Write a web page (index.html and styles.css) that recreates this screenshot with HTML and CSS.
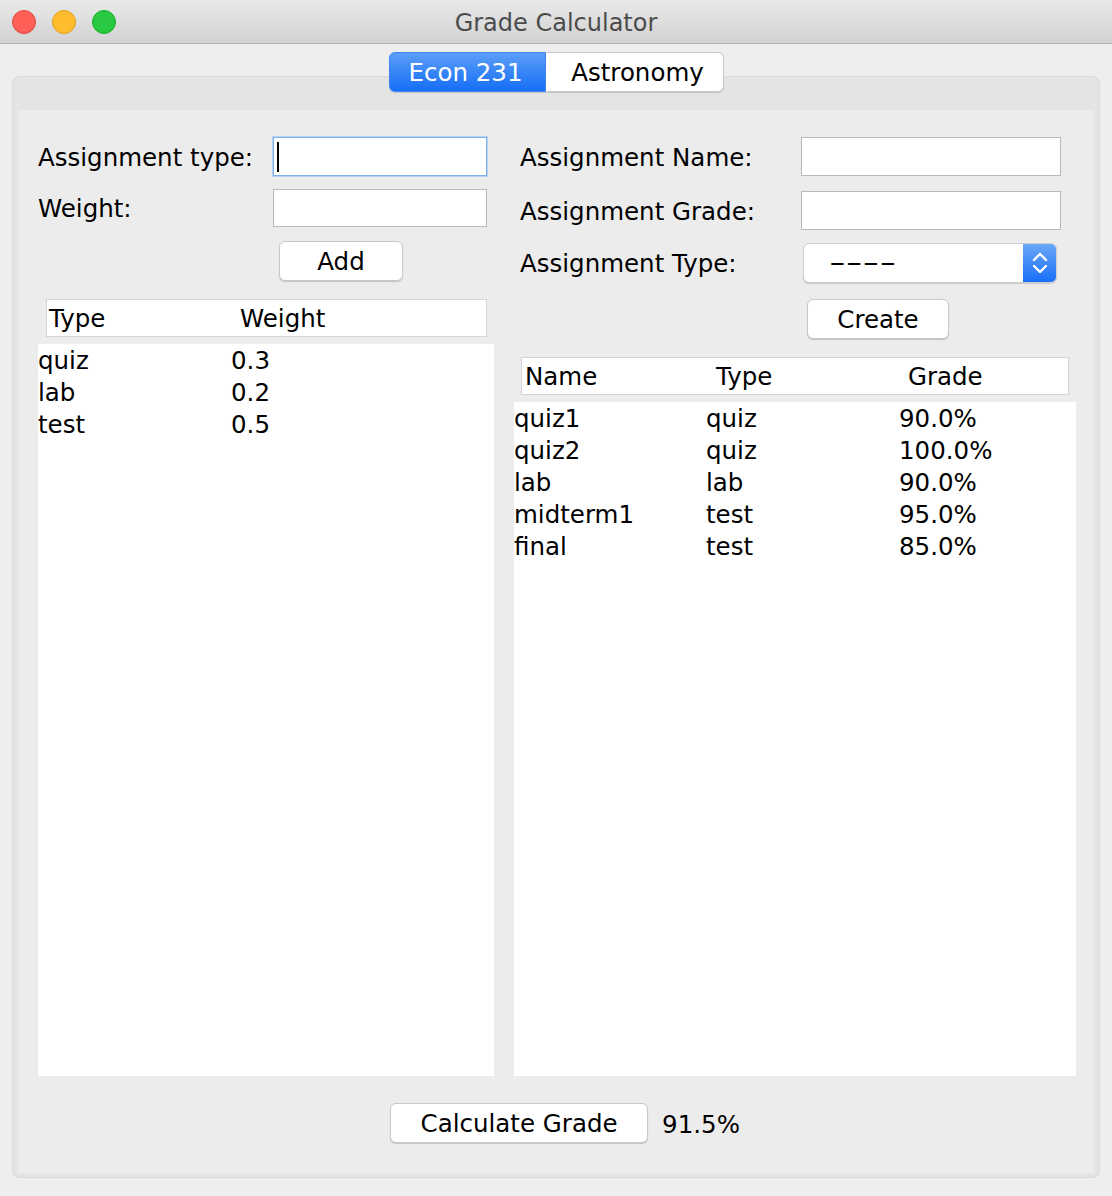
FILE: index.html
```html
<!DOCTYPE html>
<html>
<head>
<meta charset="utf-8">
<title>Grade Calculator</title>
<link rel="stylesheet" href="styles.css">
</head>
<body>
<div class="window">
  <div class="titlebar">
    <div class="lights">
      <span class="light red"></span>
      <span class="light yellow"></span>
      <span class="light green"></span>
    </div>
    <div class="title">Grade Calculator</div>
  </div>
  <div class="win-body">
    <div class="tabs">
      <div class="tab active">Econ 231</div>
      <div class="tab">Astronomy</div>
    </div>
    <div class="pane">
      <div class="content">
        <div class="columns">
          <div class="col left">
            <div class="form-row r1">
              <label class="lbl lbl-left">Assignment type:</label>
              <div class="field focused w-left"><span class="caret"></span></div>
            </div>
            <div class="form-row r2">
              <label class="lbl lbl-left">Weight:</label>
              <div class="field w-left h38"></div>
            </div>
            <button class="btn btn-add">Add</button>
            <div class="thead thead-left">
              <span>Type</span><span>Weight</span>
            </div>
            <div class="tbody tbody-left">
              <div class="trow"><span>quiz</span><span>0.3</span></div>
              <div class="trow"><span>lab</span><span>0.2</span></div>
              <div class="trow"><span>test</span><span>0.5</span></div>
            </div>
          </div>
          <div class="col right">
            <div class="form-row r1">
              <label class="lbl lbl-right">Assignment Name:</label>
              <div class="field w-right"></div>
            </div>
            <div class="form-row r2b">
              <label class="lbl lbl-right">Assignment Grade:</label>
              <div class="field w-right"></div>
            </div>
            <div class="form-row r3">
              <label class="lbl lbl-right lbl-combo">Assignment Type:</label>
              <div class="combo">
                <span class="combo-text"><span class="dashes">----</span></span>
                <span class="combo-arrows">
                  <svg width="20" height="28" viewBox="0 0 20 28">
                    <path d="M4 11 L10 5 L16 11" fill="none" stroke="#fff" stroke-width="2.4" stroke-linecap="round" stroke-linejoin="round"/>
                    <path d="M4 17 L10 23 L16 17" fill="none" stroke="#fff" stroke-width="2.4" stroke-linecap="round" stroke-linejoin="round"/>
                  </svg>
                </span>
              </div>
            </div>
            <button class="btn btn-create">Create</button>
            <div class="thead thead-right">
              <span>Name</span><span>Type</span><span>Grade</span>
            </div>
            <div class="tbody tbody-right">
              <div class="trow"><span>quiz1</span><span>quiz</span><span>90.0%</span></div>
              <div class="trow"><span>quiz2</span><span>quiz</span><span>100.0%</span></div>
              <div class="trow"><span>lab</span><span>lab</span><span>90.0%</span></div>
              <div class="trow"><span>midterm1</span><span>test</span><span>95.0%</span></div>
              <div class="trow"><span>final</span><span>test</span><span>85.0%</span></div>
            </div>
          </div>
        </div>
        <div class="bottom">
          <button class="btn btn-calc">Calculate Grade</button>
          <span class="result">91.5%</span>
        </div>
      </div>
    </div>
  </div>
</div>
</body>
</html>
```

FILE: styles.css
```css
* { box-sizing: border-box; }
html, body { margin: 0; padding: 0; }
body {
  width: 1112px;
  height: 1196px;
  background: #eeeeee;
  font-family: "DejaVu Sans", "Liberation Sans", sans-serif;
  font-size: 24.5px;
  color: #000;
  overflow: hidden;
}
.window { width: 1112px; height: 1196px; display: flex; flex-direction: column; }

.titlebar {
  height: 44px;
  flex: 0 0 44px;
  background: linear-gradient(#e9e9e9, #d2d2d2);
  border-bottom: 1px solid #b1b1b1;
  display: flex;
  align-items: center;
  position: relative;
}
.lights { display: flex; gap: 16px; padding-left: 12px; }
.light { width: 24px; height: 24px; border-radius: 50%; display: block; }
.red { background: #fe5f57; border: 1px solid #e2463f; }
.yellow { background: #febc2e; border: 1px solid #e1a116; }
.green { background: #28c840; border: 1px solid #14ae2c; }
.title {
  flex: 1;
  text-align: center;
  color: #4c4c4c;
  font-size: 24px;
  margin-left: -116px;
  padding-top: 3px;
}

.win-body { flex: 1; padding: 8px 12px 18px 12px; display: flex; flex-direction: column; }

.tabs {
  display: flex;
  justify-content: center;
  height: 40px;
  margin-bottom: -16px;
  position: relative;
  z-index: 1;
  padding-left: 1px;
}
.tab {
  height: 40px;
  display: flex;
  align-items: center;
  justify-content: center;
  font-size: 24.5px;
  background: #fff;
  border: 1px solid #c9c9c9;
  box-shadow: 0 1px 1px rgba(0,0,0,0.15);
  padding-top: 1px;
}
.tab.active {
  width: 157px;
  color: #fff;
  background: linear-gradient(#5b9ef8, #156ef6);
  border-color: #3f86f3;
  border-radius: 6px 0 0 6px;
  padding-right: 4px;
}
.tab:not(.active) {
  width: 178px;
  border-left: none;
  border-radius: 0 6px 6px 0;
  padding-left: 6px;
}

.pane {
  flex: 1;
  background: #e4e4e4;
  border: 1px solid #dadada;
  border-radius: 7px;
  padding: 33px 5px 4px 5px;
  display: flex;
}
.content {
  flex: 1;
  background: #ececec;
  display: flex;
  flex-direction: column;
  padding: 27px 18px 30px 20px;
}
.columns { flex: 1; display: flex; gap: 20px; }
.col { display: flex; flex-direction: column; }
.col.left { width: 456px; }
.col.right { width: 562px; }

.form-row { display: flex; align-items: center; }
.r1 { height: 39px; }
.r2 { height: 38px; margin-top: 13px; }
.r2b { height: 39px; margin-top: 15px; }
.r3 { height: 40px; margin-top: 13px; }
.lbl { display: block; white-space: nowrap; padding-top: 1px; }
.lbl-left { width: 235px; }
.lbl-right { width: 287px; padding-left: 6px; }
.lbl-combo { width: 289px; }

.field {
  height: 39px;
  background: #fff;
  border: 1px solid #b9b9b9;
  position: relative;
  display: flex;
  align-items: center;
}
.field.h38 { height: 38px; }
.w-left { width: 214px; }
.w-right { width: 260px; }
.field.focused {
  border: 1px solid #7fb0ee;
  box-shadow: 0 0 0 1px #b6d3f7;
}
.caret { display: block; width: 2px; height: 30px; background: #000; margin-left: 3px; }

.btn {
  display: flex;
  align-items: center;
  justify-content: center;
  font-family: inherit;
  font-size: 24.5px;
  color: #000;
  background: #fff;
  border: 1px solid #c8c8c8;
  border-radius: 6px;
  box-shadow: 0 1px 1px rgba(0,0,0,0.18);
  padding: 0;
  height: 40px;
}
.btn-add { width: 124px; margin-top: 14px; margin-left: 241px; }
.btn-create { width: 142px; margin-top: 16px; margin-left: 293px; }

.combo {
  width: 254px;
  height: 40px;
  background: #fff;
  border: 1px solid #cdcdcd;
  border-radius: 6px;
  box-shadow: 0 1px 1px rgba(0,0,0,0.15);
  display: flex;
  align-items: stretch;
  overflow: hidden;
}
.combo-text { flex: 1; display: flex; align-items: center; padding-left: 25px; padding-bottom: 2px; }
.dashes { display: inline-block; transform: scaleX(1.9); transform-origin: left center; }
.combo-arrows {
  width: 33px;
  background: linear-gradient(#6aa8f9, #1a6ff6);
  display: flex;
  align-items: center;
  justify-content: center;
}

.thead {
  height: 38px;
  background: #fff;
  border: 1px solid #d4d4d4;
  display: grid;
  align-items: center;
  margin-top: 18px;
  padding-top: 1px;
}
.thead-left { width: 441px; margin-left: 8px; grid-template-columns: 191px 1fr; padding-left: 2px; }
.thead-right { width: 548px; margin-left: 7px; grid-template-columns: 191px 192px 1fr; padding-left: 3px; }

.tbody { flex: 1; background: #fff; margin-top: 7px; }
.trow { display: grid; height: 32px; align-items: center; padding-top: 1px; }
.tbody-left .trow { grid-template-columns: 193px 1fr; }
.tbody-right .trow { grid-template-columns: 192px 193px 1fr; }

.bottom {
  display: flex;
  align-items: center;
  justify-content: center;
  margin-top: 27px;
  gap: 14px;
  padding-left: 16px;
}
.btn-calc { width: 258px; height: 40px; }
.result { padding-top: 3px; }
```
